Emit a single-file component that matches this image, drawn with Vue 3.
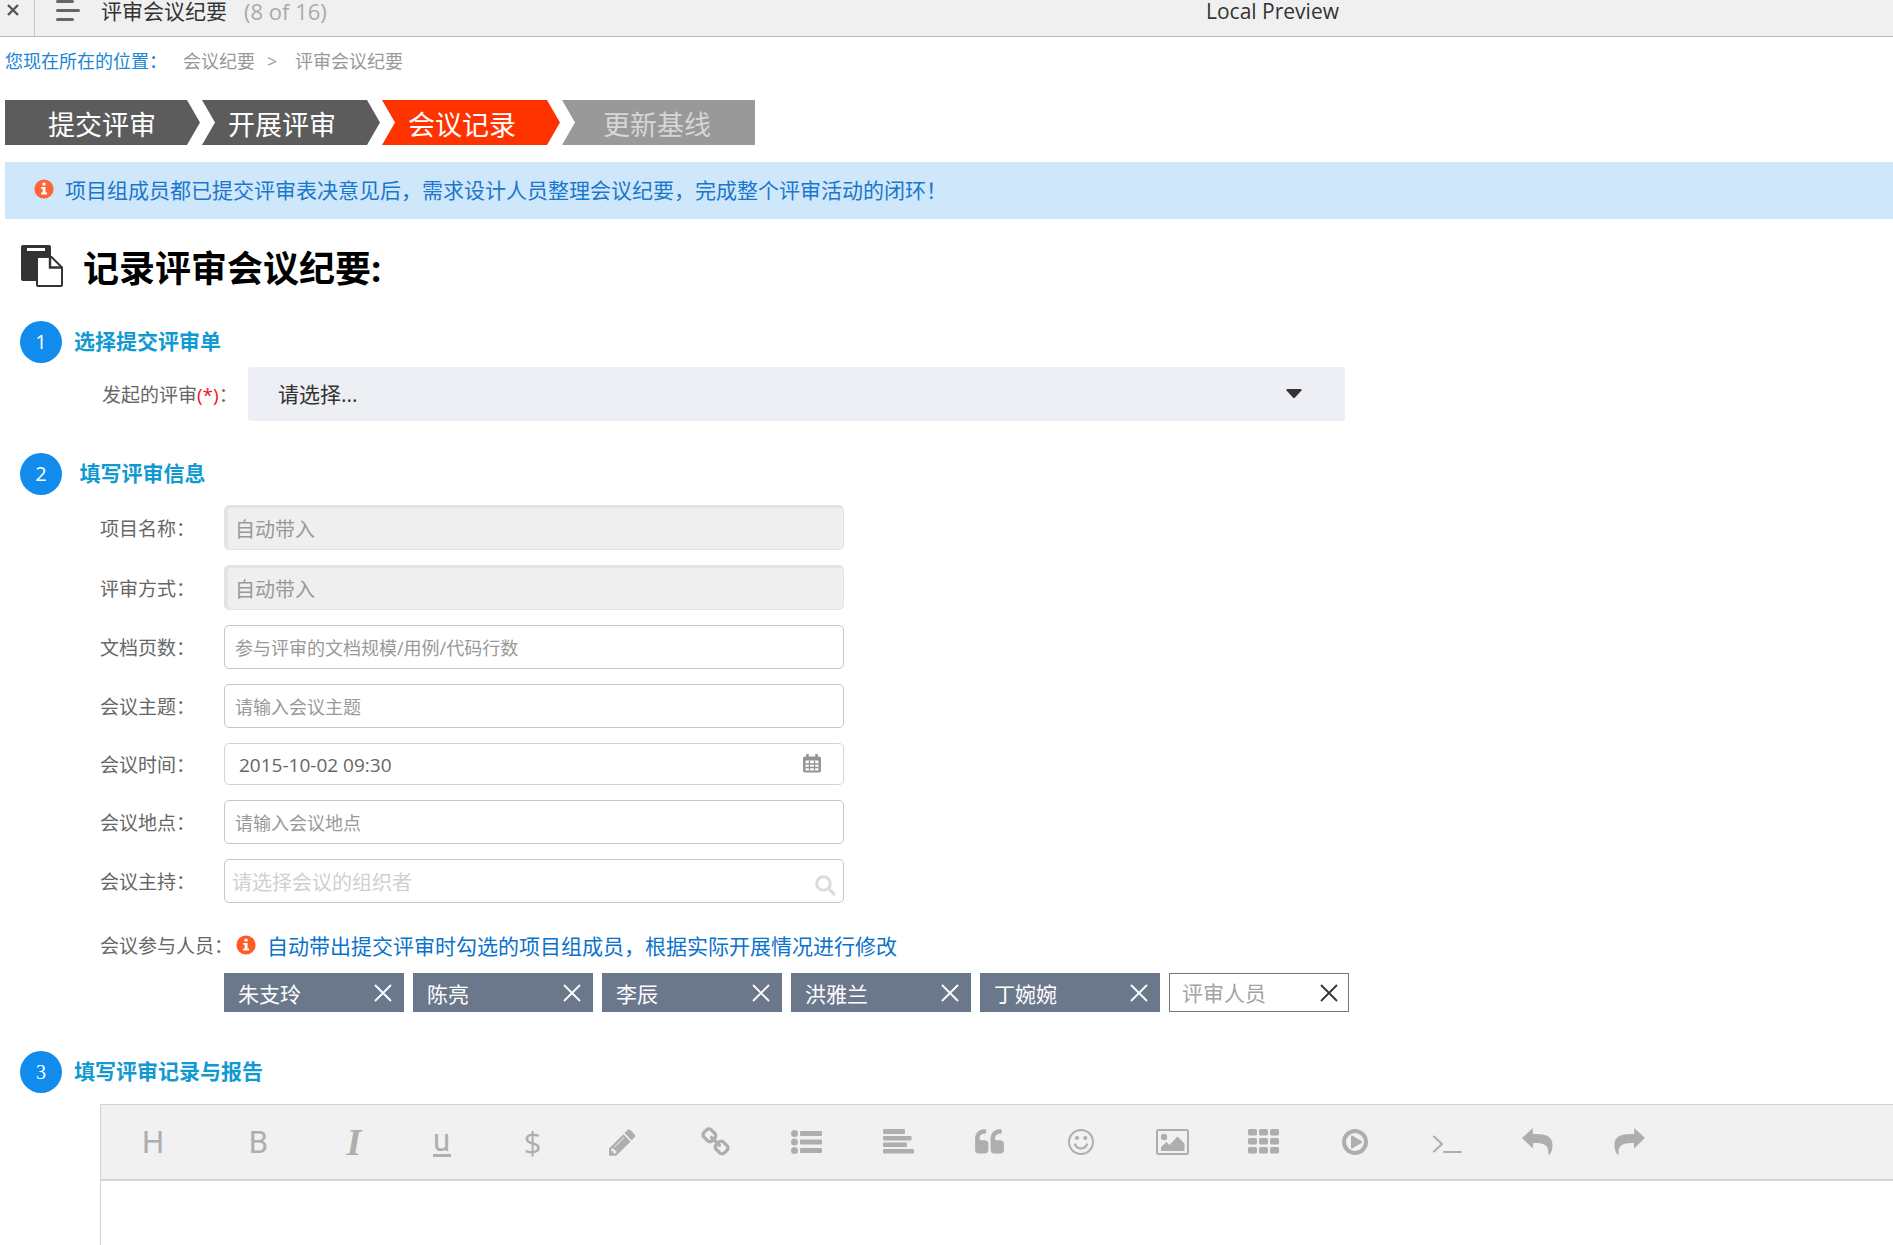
<script setup>
import { ref } from 'vue'

const steps = [
  { name: '提交评审', state: 'done' },
  { name: '开展评审', state: 'done' },
  { name: '会议记录', state: 'current' },
  { name: '更新基线', state: 'todo' },
]

const members = ref(['朱支玲', '陈亮', '李辰', '洪雅兰', '丁婉婉'])
const meetingTime = ref('2015-10-02 09:30')

function removeMember(name) {
  members.value = members.value.filter((m) => m !== name)
}
</script>

<template>
  <div class="page">
    <header class="topbar">
      <button class="close" type="button" aria-label="关闭">
        <svg width="14" height="14" viewBox="0 0 14 14"><path d="M2 2l10 10M12 2L2 12" stroke="#555" stroke-width="2.4" /></svg>
      </button>
      <button class="menu" type="button" aria-label="菜单">
        <svg width="24" height="22" viewBox="0 0 24 22"><path d="M1.5 1.5h15M1.5 10.500h21M1.500 19.500h15" stroke="#666" stroke-width="3" stroke-linecap="round" /></svg>
      </button>
      <div class="doc">
        <span class="doc-title">评审会议纪要</span>
        <span class="doc-count">(8 of 16)</span>
      </div>
      <span class="preview">Local Preview</span>
    </header>

    <nav class="crumbs">
      <span class="crumbs-label">您现在所在的位置：</span>
      <a href="#">会议纪要</a>
      <span class="sep">&gt;</span>
      <a href="#">评审会议纪要</a>
    </nav>

    <ol class="steps">
      <li v-for="s in steps" :key="s.name" :class="s.state">{{ s.name }}</li>
    </ol>

    <p class="alert">
      <svg class="info" width="20" height="20" viewBox="0 0 20 20"><circle cx="10" cy="10" r="9.600" fill="#fb6537" /><path d="M8.500 3.800h3v2.600h-3zM7.200 8h4.300v5.500h1.500v1.900H7.200v-1.900h1.500V9.800H7.200z" fill="#fff" /></svg>
      <span>项目组成员都已提交评审表决意见后，需求设计人员整理会议纪要，完成整个评审活动的闭环！</span>
    </p>

    <h1 class="heading">
      <svg width="42" height="42" viewBox="0 0 42 42">
        <path d="M2 0h26q2 0 2 2v9l-12 1v24H2q-2 0-2-2V2q0-2 2-2z" fill="#333" />
        <path d="M6 3h18v3H6z" fill="#fff" />
        <path d="M17 12h13.500L41 22.500V40q0 1-1 1H17q-1 0-1-1V13q0-1 1-1z" fill="#fff" stroke="#333" stroke-width="2" />
        <path d="M29 12v10.500h12" fill="none" stroke="#333" stroke-width="2.400" />
      </svg>
      <span>记录评审会议纪要:</span>
    </h1>

    <section>
      <h2 class="section-head"><span class="num">1</span><span class="section-title">选择提交评审单</span></h2>
      <div class="select-row">
        <label for="review">发起的评审<em>(*)</em>：</label>
        <div class="select-box">
          <select id="review">
            <option>请选择...</option>
          </select>
          <svg class="caret" width="16" height="10" viewBox="0 0 16 10"><path d="M1 0h14q1 .500 .500 1.500L8.800 8.700q-.800 .800-1.600 0L.5 1.500Q0 .5 1 0z" fill="#333" /></svg>
        </div>
      </div>
    </section>

    <section class="details">
      <h2 class="section-head"><span class="num">2</span><span class="section-title">&nbsp;填写评审信息</span></h2>
      <div class="fields">
        <div class="field">
          <label for="project">项目名称：</label>
          <input id="project" class="auto" type="text" value="自动带入" readonly />
        </div>
        <div class="field">
          <label for="mode">评审方式：</label>
          <input id="mode" class="auto" type="text" value="自动带入" readonly />
        </div>
        <div class="field">
          <label for="pages">文档页数：</label>
          <input id="pages" type="text" placeholder="参与评审的文档规模/用例/代码行数" />
        </div>
        <div class="field">
          <label for="topic">会议主题：</label>
          <input id="topic" type="text" placeholder="请输入会议主题" />
        </div>
        <div class="field">
          <label for="time">会议时间：</label>
          <div class="icon-input">
            <input id="time" v-model="meetingTime" class="date" type="text" />
            <svg class="calendar" width="18" height="19" viewBox="0 0 18 19">
              <path d="M2 2.500h14q2 0 2 2v12q0 2-2 2H2q-2 0-2-2v-12q0-2 2-2z" fill="#949494" />
              <path d="M4.500 0v4M13.500 0v4" stroke="#949494" stroke-width="2.500" />
              <path d="M2.500 6.500h13v10h-13z" fill="#fff" />
              <path d="M6.500 6.500v10M11.500 6.500v10M2.500 10h13M2.500 13.500h13" stroke="#949494" stroke-width="1.300" />
            </svg>
          </div>
        </div>
        <div class="field">
          <label for="place">会议地点：</label>
          <input id="place" type="text" placeholder="请输入会议地点" />
        </div>
        <div class="field">
          <label for="host">会议主持：</label>
          <div class="icon-input">
            <input id="host" class="picker" type="text" placeholder="请选择会议的组织者" />
            <svg class="search" width="21" height="21" viewBox="0 0 21 21"><circle cx="8.500" cy="8.500" r="6.800" fill="none" stroke="#dcdcdc" stroke-width="3" /><path d="M13.500 13.500l5.500 5.500" stroke="#dcdcdc" stroke-width="3.200" stroke-linecap="round" /></svg>
          </div>
        </div>
      </div>

      <div class="people-head">
        <label for="reviewer">会议参与人员：</label>
        <svg class="info" width="20" height="20" viewBox="0 0 20 20"><circle cx="10" cy="10" r="9.600" fill="#ff5a28" /><path d="M8.500 3.800h3v2.600h-3zM7.200 8h4.300v5.500h1.500v1.900H7.200v-1.900h1.500V9.800H7.200z" fill="#fff" /></svg>
        <span class="hint">自动带出提交评审时勾选的项目组成员，根据实际开展情况进行修改</span>
      </div>
      <ul class="tags">
        <li v-for="m in members" :key="m" class="tag">
          <span>{{ m }}</span>
          <button type="button" :aria-label="'移除' + m" @click="removeMember(m)">
            <svg width="18" height="18" viewBox="0 0 18 18"><path d="M1 1l16 16M17 1L1 17" stroke="currentColor" stroke-width="1.800" /></svg>
          </button>
        </li>
        <li class="tag blank">
          <input id="reviewer" type="text" placeholder="评审人员" />
          <button type="button" aria-label="清空">
            <svg width="18" height="18" viewBox="0 0 18 18"><path d="M1 1l16 16M17 1L1 17" stroke="currentColor" stroke-width="1.800" /></svg>
          </button>
        </li>
      </ul>
    </section>

    <section class="report">
      <h2 class="section-head"><span class="num serif">3</span><span class="section-title">填写评审记录与报告</span></h2>
      <div class="editor">
        <div class="toolbar">
          <div class="text-tools">
            <button type="button" aria-label="标题">H</button>
            <button type="button" aria-label="加粗">B</button>
            <button type="button" aria-label="斜体" class="italic">I</button>
            <button type="button" aria-label="下划线"><span class="under">u</span></button>
          </div>
          <div class="icon-tools">
            <button type="button" aria-label="公式" class="dollar">$</button>
            <button type="button" aria-label="编辑">
              <svg width="31" height="31" viewBox="128 0 1792 1792"><path d="M491 1536l91-91-235-235-91 91v107h128v128h107zm523-928q0-22-22-22-10 0-17 7l-542 542q-7 7-7 17 0 22 22 22 10 0 17-7l542-542q7-7 7-17zm-54-192l416 416-832 832h-416v-416zm683 96q0 53-37 90l-166 166-416-416 166-165q36-38 90-38 53 0 91 38l235 234q37 39 37 91z" /></svg>
            </button>
            <button type="button" aria-label="链接">
              <svg width="31" height="31" viewBox="0 0 1792 1792"><path d="M1520 1216q0-40-28-68l-208-208q-28-28-68-28-42 0-72 32 3 3 19 18.500t21.500 21.500 15 19 13 25.500 3.500 27.500q0 40-28 68t-68 28q-15 0-27.500-3.500t-25.500-13-19-15-21.500-21.500-18.500-19q-33 31-33 73 0 40 28 68l206 207q27 27 68 27 40 0 68-26l147-146q28-28 28-67zm-703-705q0-40-28-68l-206-207q-28-28-68-28-39 0-68 27l-147 146q-28 28-28 67 0 40 28 68l208 208q27 27 68 27 42 0 72-31-3-3-19-18.500t-21.500-21.500-15-19-13-25.500-3.500-27.500q0-40 28-68t68-28q15 0 27.500 3.500t25.500 13 19 15 21.500 21.500 18.500 19q33-31 33-73zm895 705q0 120-85 203l-147 146q-83 83-203 83-121 0-204-85l-206-207q-83-83-83-203 0-123 88-209l-88-88q-86 88-208 88-120 0-204-84l-208-208q-84-84-84-204t85-203l147-146q83-83 203-83 121 0 204 85l206 207q83 83 83 203 0 123-88 209l88 88q86-88 208-88 120 0 204 84l208 208q84 84 84 204z" /></svg>
            </button>
            <button type="button" aria-label="列表">
              <svg width="31" height="26" viewBox="0 0 31 26"><circle cx="3.500" cy="4.500" r="3.500" /><circle cx="3.500" cy="13" r="3.500" /><circle cx="3.500" cy="21.500" r="3.500" /><rect x="9" y="2" width="22" height="5" rx="1" /><rect x="9" y="10.500" width="22" height="5" rx="1" /><rect x="9" y="19" width="22" height="5" rx="1" /></svg>
            </button>
            <button type="button" aria-label="左对齐">
              <svg width="31" height="26" viewBox="0 0 31 26"><rect y="0" width="22" height="5" rx="1" /><rect y="7" width="28.500" height="4.500" rx="1" /><rect y="13.500" width="24" height="4.500" rx="1" /><rect y="20" width="31" height="4.500" rx="1" /></svg>
            </button>
            <button type="button" aria-label="引用">
              <svg width="31" height="31" viewBox="0 0 1792 1792"><path d="M832 960v384q0 80-56 136t-136 56h-384q-80 0-136-56t-56-136v-704q0-104 40.500-198.500t109.500-163.500 163.500-109.500 198.500-40.500h64q26 0 45 19t19 45v128q0 26-19 45t-45 19h-64q-106 0-181 75t-75 181v32q0 40 28 68t68 28h224q80 0 136 56t56 136zm896 0v384q0 80-56 136t-136 56h-384q-80 0-136-56t-56-136v-704q0-104 40.500-198.500t109.500-163.500 163.500-109.500 198.500-40.500h64q26 0 45 19t19 45v128q0 26-19 45t-45 19h-64q-106 0-181 75t-75 181v32q0 40 28 68t68 28h224q80 0 136 56t56 136z" /></svg>
            </button>
            <button type="button" aria-label="表情">
              <svg width="26" height="26" viewBox="0 0 26 26"><circle cx="13" cy="13" r="12" fill="none" stroke="#aeaeae" stroke-width="2" /><circle cx="9" cy="9" r="2.100" /><circle cx="17.300" cy="9" r="2.100" /><path d="M7 15.500q2 4 6 4t6-4" fill="none" stroke="#aeaeae" stroke-width="2.200" stroke-linecap="round" /></svg>
            </button>
            <button type="button" aria-label="图片">
              <svg width="33" height="26" viewBox="0 0 33 26"><rect x="1" y="1" width="31" height="24" rx="1.500" fill="none" stroke="#aeaeae" stroke-width="2" /><circle cx="8" cy="8" r="3.200" /><path d="M5 22v-4l5.500-5 3 3L21.500 7.500l7 7V22z" /></svg>
            </button>
            <button type="button" aria-label="表格">
              <svg width="31" height="26" viewBox="0 0 31 26"><rect v-for="n in 9" :key="n" :x="((n - 1) % 3) * 11" :y="Math.floor((n - 1) / 3) * 9" width="9" height="6.500" rx="1.500" /></svg>
            </button>
            <button type="button" aria-label="视频">
              <svg width="26" height="26" viewBox="0 0 26 26"><circle cx="13" cy="13" r="11" fill="none" stroke="#aeaeae" stroke-width="4" /><path d="M9 7.500q0-1.500 1.500-.800l9 5.400q1 .900 0 1.800l-9 5.400q-1.500 .700-1.500-.800z" /></svg>
            </button>
            <button type="button" aria-label="代码">
              <svg width="30" height="26" viewBox="0 0 30 26"><path d="M2 7.500l8 7.500-8 7.500M12 23h17" fill="none" stroke="#aeaeae" stroke-width="2" stroke-linecap="round" /></svg>
            </button>
            <button type="button" aria-label="撤销">
              <svg width="31" height="28" viewBox="0 0 31 28"><path d="M0 10L10.800 0v6C22 6 30.500 7 30.500 17c0 5-1.500 8.500-4 10.500C26.500 18 25 15 11 15v5.500z" /></svg>
            </button>
            <button type="button" aria-label="重做">
              <svg width="31" height="28" viewBox="0 0 31 28"><path d="M31 10L20.200 0v6C9 6 .5 7 .5 17c0 5 1.500 8.500 4 10.500C4.500 18 6 15 20 15v5.500z" /></svg>
            </button>
          </div>
        </div>
        <textarea aria-label="评审记录与报告"></textarea>
      </div>
    </section>
  </div>
</template>

<style>
body {
  margin: 0;
  background: #fff;
}
</style>

<style scoped>
.page,
.page * {
  box-sizing: border-box;
}
.page {
  display: flex;
  flex-direction: column;
  min-height: 100vh;
  color: #666;
  font-family: 'Open Sans', 'Noto Sans CJK SC', sans-serif;
  font-size: 20px;
}
button,
input,
select,
textarea {
  font-family: inherit;
  margin: 0;
}
button {
  display: flex;
  align-items: center;
  justify-content: center;
  padding: 0;
  border: 0;
  background: none;
  color: inherit;
  cursor: pointer;
}
label {
  font-size: 19px;
  white-space: nowrap;
}
svg {
  flex: none;
  display: block;
}

.topbar {
  display: grid;
  grid-template-columns: 35px 66px 1105px 1fr;
  align-items: start;
  height: 37px;
  border-bottom: 1px solid #bdbdbd;
  background: #f0f0f0;
  color: #333;
  font-size: 21px;
  line-height: 22px;
  white-space: nowrap;
}
.close {
  height: 36px;
  padding: 3px 9px 0 0;
  align-items: flex-start;
  border-right: 1px solid #c8c8c8;
}
.menu {
  justify-content: flex-start;
  padding-left: 21px;
}
.doc {
  display: flex;
  gap: 17px;
}
.doc-count {
  color: #aaa;
  font-size: 22px;
}

.crumbs {
  display: flex;
  padding: 12px 5px 27px;
  font-size: 18px;
  line-height: 24px;
  color: #999;
  white-space: nowrap;
}
.crumbs a {
  color: inherit;
  text-decoration: none;
}
.crumbs-label {
  width: 178px;
  color: #1a85d6;
}
.sep {
  width: 40px;
  padding-left: 12px;
}

.steps {
  display: flex;
  gap: 2px;
  margin: 0;
  padding: 0 5px;
  list-style: none;
  font-size: 27px;
  line-height: 50px;
  color: #fff;
}
.steps li {
  height: 45px;
  padding: 0 44px 0 26px;
  background: #5c5c5c;
  white-space: nowrap;
  clip-path: polygon(0 0, calc(100% - 13px) 0, 100% 50%, calc(100% - 13px) 100%, 0 100%, 13px 50%);
}
.steps li:first-child {
  padding-left: 43px;
  clip-path: polygon(0 0, calc(100% - 13px) 0, 100% 50%, calc(100% - 13px) 100%, 0 100%);
}
.steps li:last-child {
  padding-left: 41px;
  clip-path: polygon(0 0, 100% 0, 100% 100%, 0 100%, 13px 50%);
}
.steps .current {
  background: #ff3300;
}
.steps .todo {
  background: #999;
  color: #d6d6d6;
}

.alert {
  display: flex;
  align-items: center;
  gap: 11px;
  height: 57px;
  margin: 17px 0 0 5px;
  padding: 0 0 3px 29px;
  background: #cfe7fa;
  color: #1b77cc;
  font-size: 21px;
  white-space: nowrap;
}

.heading {
  display: flex;
  align-items: center;
  gap: 20px;
  height: 44px;
  margin: 25px 0 33px;
  padding-left: 21px;
  color: #000;
  font-size: 36px;
  font-weight: 700;
  line-height: 44px;
}
.heading span {
  padding-top: 6px;
}

.section-head {
  display: flex;
  align-items: center;
  gap: 12px;
  margin: 0;
  padding-left: 20px;
  color: #1199d2;
  font-size: 21px;
  font-weight: 700;
  line-height: 42px;
}
.section-title {
  height: 42px;
  line-height: 40px;
}
.num {
  width: 42px;
  height: 42px;
  border-radius: 50%;
  background: #128cec;
  color: #fff;
  font-size: 20px;
  font-weight: 400;
  text-align: center;
}
.serif {
  font-family: 'Liberation Serif', serif;
}

.select-row {
  display: flex;
  align-items: center;
  margin: 4px 0 32px;
  padding-left: 102px;
}
.select-row label {
  flex: none;
  width: 146px;
}
.select-row em {
  color: #f01020;
  font-style: normal;
}
.select-box {
  position: relative;
  flex: 1;
  max-width: 1097px;
}
select {
  display: block;
  width: 100%;
  height: 54px;
  padding: 0 30px;
  border: 0;
  border-radius: 3px;
  background: #eeeff4;
  color: #333;
  font-size: 21px;
  appearance: none;
}
.caret {
  position: absolute;
  top: 22px;
  right: 43px;
  pointer-events: none;
}

.fields {
  display: flex;
  flex-direction: column;
  gap: 15px;
  margin-top: 10px;
  padding-left: 100px;
}
.field {
  display: flex;
  align-items: center;
}
.field label {
  flex: none;
  width: 124px;
}
.field input {
  display: block;
  width: 100%;
  max-width: 620px;
  height: 44px;
  padding: 2px 10px 0;
  border: 1px solid #c6c6c6;
  border-radius: 5px;
  background: #fff;
  color: #666;
  font-size: 18px;
}
.field input::placeholder {
  color: #999;
}
.field .auto {
  height: 45px;
  border-color: #e2e2e2;
  background: #efefef;
  box-shadow: inset 3px 2px #e4e4e4;
  color: #999;
  font-size: 20px;
}
.icon-input {
  position: relative;
  flex: 1;
  max-width: 620px;
}
.field .date {
  height: 42px;
  padding-left: 14px;
  border-color: #d3d3d3;
  font-size: 19px;
}
.field .picker {
  padding-left: 7px;
  font-size: 20px;
}
.field .picker::placeholder {
  color: #d0d0d0;
}
.calendar {
  position: absolute;
  top: 11px;
  right: 23px;
}
.search {
  position: absolute;
  top: 16px;
  right: 8px;
}

.people-head {
  display: flex;
  align-items: center;
  height: 42px;
  margin-top: 21px;
  padding-left: 100px;
  white-space: nowrap;
}
.people-head label {
  width: 136px;
}
.hint {
  margin-left: 11px;
  color: #0b72cc;
  font-size: 21px;
}
.tags {
  display: flex;
  flex-wrap: wrap;
  gap: 9px;
  margin: 7px 0 39px;
  padding: 0 0 0 224px;
  list-style: none;
}
.tag {
  display: flex;
  align-items: center;
  justify-content: space-between;
  width: 180px;
  height: 39px;
  padding: 0 12px 0 14px;
  background: #6b788c;
  color: #fff;
  font-size: 21px;
}
.blank {
  padding: 0 10px 0 12px;
  border: 1px solid #777;
  background: #fff;
  color: #333;
}
.blank input {
  width: 100px;
  padding: 0;
  border: 0;
  background: none;
  font-size: 21px;
}
.blank input::placeholder {
  color: #a3a3a3;
}

.report {
  display: flex;
  flex: 1;
  flex-direction: column;
}
.editor {
  display: flex;
  flex: 1;
  flex-direction: column;
  margin: 11px 0 0 100px;
  border-top: 1px solid #d2d2d2;
  border-left: 1px solid #d2d2d2;
}
.toolbar {
  display: flex;
  height: 76px;
  border-bottom: 2px solid #d5d5d5;
  background: #f1f1f1;
}
.text-tools {
  display: grid;
  grid-template-columns: 104px 107px 84px 91px;
}
.icon-tools {
  display: grid;
  flex: 1;
  grid-template-columns: repeat(13, minmax(0, 1fr));
  max-width: 1188px;
}
.toolbar button {
  color: #aeaeae;
  fill: #aeaeae;
  font-family: Roboto, sans-serif;
  font-size: 31px;
}
.toolbar .italic {
  font-family: 'Liberation Serif', serif;
  font-size: 38px;
  font-style: italic;
  font-weight: 700;
}
.toolbar .dollar {
  font-family: 'Open Sans', sans-serif;
}
.under {
  width: 18px;
  border-bottom: 3px solid #aeaeae;
  line-height: 27px;
}
textarea {
  display: block;
  flex: 1;
  width: 100%;
  min-height: 40px;
  padding: 16px;
  border: 0;
  outline: 0;
  resize: none;
  font-size: 20px;
}
</style>
